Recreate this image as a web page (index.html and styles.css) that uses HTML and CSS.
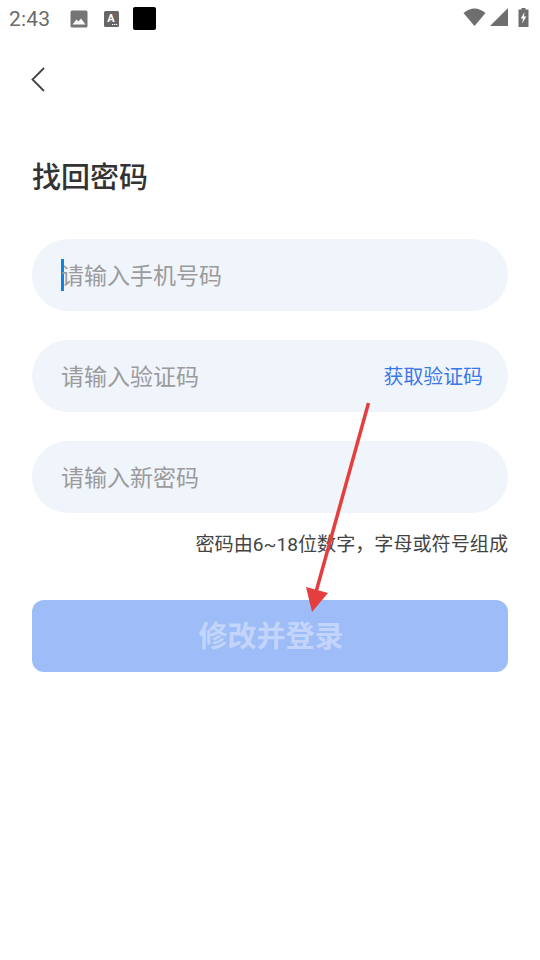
FILE: index.html
```html
<!DOCTYPE html>
<html lang="zh">
<head>
<meta charset="utf-8">
<title>找回密码</title>
<link rel="stylesheet" href="styles.css">
</head>
<body>
<div class="status">
  <span class="time">2:43</span>
  <svg class="ic-img" width="20" height="18" viewBox="0 0 20 18"><rect x="0.5" y="0.5" width="17" height="17" rx="1.5" fill="#757575"/><path d="M2.5 14.5 L6.5 9.5 L8.5 11.5 L11 8.5 L15.5 14.5Z" fill="#fff"/></svg>
  <svg class="ic-a" width="16" height="16" viewBox="0 0 16 16"><rect x="0" y="0" width="15" height="16" rx="1.5" fill="#666"/><text x="3.2" y="11" class="ic-a-t">A</text><path d="M8 13.5h1.2M10 13.5h1.2M12 13.5h1.2" stroke="#fff" stroke-width="1"/></svg>
  <span class="black"></span>
  <span class="status-right">
    <svg width="24" height="20" viewBox="0 0 24 20"><path d="M0.5 6 Q11.5 -3 22.5 6 L11.5 19Z" fill="#6e6e6e"/></svg>
    <svg width="20" height="20" viewBox="0 0 20 20"><path d="M0 19 L18 1 V19Z" fill="#6e6e6e"/></svg>
    <svg class="ic-bat" width="12" height="20" viewBox="0 0 12 20"><path d="M3.5 1 H7.5 V2.500 H10.500 V20 H0.500 V2.500 H3.500Z" fill="#6e6e6e"/><path d="M6.500 5 L2.800 11.500 H5 L4.200 16.500 L8.300 9.500 H6Z" fill="#fff"/></svg>
  </span>
</div>
<div class="nav">
  <svg width="16" height="26" viewBox="0 0 16 26"><path d="M14 1 L2.500 12.500 L14 24" fill="none" stroke="#444" stroke-width="1.800"/></svg>
</div>
<h1 class="title">找回密码</h1>
<form class="form">
  <div class="field"><span class="caret"></span><span class="ph">请输入手机号码</span></div>
  <div class="field"><span class="ph">请输入验证码</span><span class="code">获取验证码</span></div>
  <div class="field"><span class="ph">请输入新密码</span></div>
</form>
<p class="hint">密码由6~18位数字，字母或符号组成</p>
<div class="btn"><span class="btn-label">修改并登录</span></div>
<svg class="arrow" width="540" height="960" viewBox="0 0 540 960"><path d="M368.500 403 L316 592" stroke="#e53e3e" stroke-width="3.500" fill="none"/><path d="M312 612 L306 587 L328 593Z" fill="#e53e3e"/></svg>
</body>
</html>
```
FILE: styles.css
```css
* { box-sizing: border-box; }
html, body { margin: 0; padding: 0; }
body {
  width: 540px; height: 960px; background: #fff; overflow: hidden;
  font-family: "Roboto", "Noto Sans CJK SC", sans-serif;
  position: relative;
}
.status { height: 38px; display: flex; align-items: center; padding: 0 8px 0 9px; }
.time { font-size: 21px; color: #6b6b6b; width: 60px; letter-spacing: 0.2px; }
.ic-img { margin-left: 1px; margin-top: -1px; }
.ic-a { margin-left: 14px; margin-top: -1px; }
.ic-a-t { font: bold 11px "Roboto", sans-serif; fill: #fff; }
.black { width: 23px; height: 23px; background: #000; border-radius: 2px; margin-left: 13px; margin-top: -1px; }
.status-right { margin-left: auto; display: flex; align-items: center; gap: 3px; margin-top: -4px; margin-right: 2px; }
.ic-bat { margin-left: 5px; }
.nav { height: 84px; padding: 29px 0 0 30px; }
.nav svg { display: block; }
.title { margin: 0 0 0 32px; height: 117px; padding-top: 32px; font-size: 29px; line-height: 42px; font-weight: 500; color: #333; font-family: "Noto Sans CJK SC", sans-serif; }
.form { display: flex; flex-direction: column; gap: 29px; padding: 0 32px; }
.field { height: 72px; border-radius: 36px; background: #f0f4fb; display: flex; align-items: center; justify-content: space-between; padding: 0 25px 0 30px; position: relative; font-family: "Noto Sans CJK SC", sans-serif; font-size: 23px; }
.ph { color: #9b9b9b; font-size: 23px; position: relative; top: -1px; left: -1px; }
.code { color: #3a78e8; font-size: 19.900px; position: relative; top: -1px; }
.caret { position: absolute; left: 29px; top: 20px; width: 3px; height: 32px; background: #0b86e0; }
.hint { margin: 18px 32px 0 0; text-align: right; font-size: 19.100px; line-height: 27px; color: #444; font-family: "Roboto", "Noto Sans CJK SC", sans-serif; }
.btn { margin: 42px 32px 0; height: 72px; border-radius: 12px; background: #9dbcf8; color: #c3d5fa; font-size: 29px; font-weight: 700; display: flex; align-items: center; justify-content: center; font-family: "Noto Sans CJK SC", sans-serif; }
.btn-label { position: relative; top: -2px; left: 1px; }
.arrow { position: absolute; left: 0; top: 0; pointer-events: none; }
```
